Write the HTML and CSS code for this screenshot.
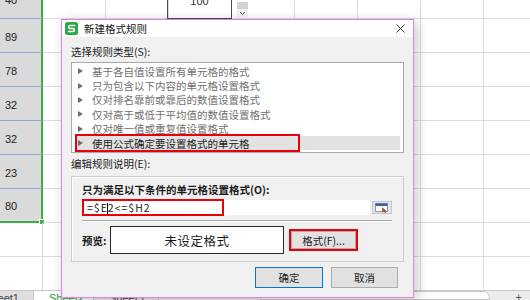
FILE: index.html
```html
<!DOCTYPE html>
<html lang="zh-CN">
    <head>
        <meta charset="UTF-8">
        <title>新建格式规则</title>
        <link rel="stylesheet" href="styles.css">
    </head>
    <body>
        <div class="page">
            <div class="sheet">
                <div class="grid">
                    <div class="cell sel top">40</div><div class="cell"></div><div class="cell"></div><div class="cell drop">100</div><div class="cell"><span class="drop-btn"><svg width="11" height="7" viewBox="0 0 11 7"><path d="M3 2 L5.5 4.5 L8 2" fill="none" stroke="#555" stroke-width="1"/></svg></span></div><div class="cell"></div><div class="cell"></div><div class="cell"></div><div class="cell"></div>
                    <div class="cell sel">89</div><div class="cell"></div><div class="cell"></div><div class="cell"></div><div class="cell"></div><div class="cell"></div><div class="cell"></div><div class="cell"></div><div class="cell"></div>
                    <div class="cell sel">78</div><div class="cell"></div><div class="cell"></div><div class="cell"></div><div class="cell"></div><div class="cell"></div><div class="cell"></div><div class="cell"></div><div class="cell"></div>
                    <div class="cell sel">32</div><div class="cell"></div><div class="cell"></div><div class="cell"></div><div class="cell"></div><div class="cell"></div><div class="cell"></div><div class="cell"></div><div class="cell"></div>
                    <div class="cell sel">32</div><div class="cell"></div><div class="cell"></div><div class="cell"></div><div class="cell"></div><div class="cell"></div><div class="cell"></div><div class="cell"></div><div class="cell"></div>
                    <div class="cell sel">23</div><div class="cell"></div><div class="cell"></div><div class="cell"></div><div class="cell"></div><div class="cell"></div><div class="cell"></div><div class="cell"></div><div class="cell"></div>
                    <div class="cell sel end">80<span class="handle"></span></div><div class="cell"></div><div class="cell"></div><div class="cell"></div><div class="cell"></div><div class="cell"></div><div class="cell"></div><div class="cell"></div><div class="cell"></div>
                    <div class="cell"></div><div class="cell"></div><div class="cell"></div><div class="cell"></div><div class="cell"></div><div class="cell"></div><div class="cell"></div><div class="cell"></div><div class="cell"></div>
                    <div class="cell"></div><div class="cell"></div><div class="cell"></div><div class="cell"></div><div class="cell"></div><div class="cell"></div><div class="cell"></div><div class="cell"></div><div class="cell"></div>
                </div>
            </div>
            <div class="tabs">
                <div class="tab first"><span>Sheet1</span></div>
                <div class="tab active">Sheet2</div>
                <div class="tab">Sheet3</div>
                <div class="scroll"></div>
                <div class="plus">+</div>
            </div>

            <div class="dialog">
                <div class="titlebar">
                    <svg class="logo" width="13" height="13" viewBox="0 0 13 13">
                        <rect width="13" height="13" rx="2.5" fill="#2aa845"/>
                        <path d="M9.6 3.6 H5.1 a1.5 1.5 0 0 0 0 3 h2.8 a1.5 1.5 0 0 1 0 3 H3.4" fill="none" stroke="#fff" stroke-width="1.5" stroke-linecap="round"/>
                    </svg>
                    <span class="title">新建格式规则</span>
                    <svg class="close" width="9" height="9" viewBox="0 0 9 9">
                        <path d="M0.5 0.5 L8.5 8.5 M8.5 0.5 L0.5 8.5" stroke="#333" stroke-width="1"/>
                    </svg>
                </div>
                <div class="body">
                    <div class="label">选择规则类型(S):</div>
                    <ul class="rule-list">
                        <li><i class="tri"></i>基于各自值设置所有单元格的格式</li>
                        <li><i class="tri"></i>只为包含以下内容的单元格设置格式</li>
                        <li><i class="tri"></i>仅对排名靠前或靠后的数值设置格式</li>
                        <li><i class="tri"></i>仅对高于或低于平均值的数值设置格式</li>
                        <li><i class="tri"></i>仅对唯一值或重复值设置格式</li>
                        <li class="selected"><i class="tri"></i>使用公式确定要设置格式的单元格<span class="mark-row"></span></li>
                    </ul>
                    <div class="label">编辑规则说明(E):</div>
                    <div class="group">
                        <div class="label bold">只为满足以下条件的单元格设置格式(O):</div>
                        <div class="formula-row">
                            <div class="formula">=$E<span class="caret"></span>2&lt;=$H2<span class="mark-formula"></span></div>
                            <div class="ref-btn">
                                <svg width="16" height="11" viewBox="0 0 16 11">
                                    <rect x="1.5" y="1.5" width="12" height="8" fill="#fff" stroke="#8a9bb5"/>
                                    <rect x="1.5" y="1.5" width="12" height="2.5" fill="#3d5f9e"/>
                                    <path d="M8 5 L13 9.5 L11 9.5 L12.2 11 L11 11 L10 9.5 L8.5 10.5 Z" fill="#b8452a"/>
                                </svg>
                            </div>
                        </div>
                        <div class="separator"></div>
                        <div class="preview-row">
                            <span class="bold">预览:</span>
                            <div class="preview">未设定格式</div>
                            <div class="mark-btn"><button class="btn small">格式(F)...</button></div>
                        </div>
                    </div>
                    <div class="footer">
                        <button class="btn primary">确定</button>
                        <button class="btn">取消</button>
                    </div>
                </div>
            </div>
        </div>
    </body>
</html>
```

FILE: styles.css
```css
* {
    box-sizing: border-box;
}

body {
    margin: 0;
    font-family: "Noto Sans CJK SC", sans-serif;
    background-color: #fff;
}

.page {
    position: relative;
    width: 530px;
    height: 300px;
    overflow: hidden;
}

/* planilha ao fundo */
.sheet {
    height: 290px;
    overflow: hidden;
}

.grid {
    display: grid;
    grid-template-columns: 43px repeat(8, 63px);
    grid-template-rows: repeat(9, 34px);
    margin-top: -15px;
    font-family: "Liberation Sans", Arial, sans-serif;
    font-size: 11px;
    color: #222;
}

.cell {
    position: relative;
    display: flex;
    align-items: center;
    border-right: 1px solid #dcdcdc;
    border-bottom: 1px solid #dcdcdc;
}

.cell.sel {
    background-color: #dadada;
    border-bottom-color: #8ea6d8;
    border-right: 2px solid #3cae49;
    padding: 2px 0 0 5px;
}

.cell.sel.top {
    padding: 0 0 3px 5px;
}

.cell.sel.end {
    border-bottom: 2px solid #3cae49;
}

.handle {
    position: absolute;
    right: -4px;
    bottom: -4px;
    width: 6px;
    height: 6px;
    background-color: #3cae49;
    border: 1px solid #fff;
}

.cell.drop {
    justify-content: center;
    padding-bottom: 3px;
    border: 1px solid #4d4d4d;
    margin-left: -2px;
    color: #333;
}

.drop-btn {
    position: absolute;
    left: 5px;
    bottom: 1px;
    width: 11px;
    height: 15px;
    display: flex;
    align-items: flex-end;
    background: linear-gradient(#d2d2d2 50%, #f2f2f2 50%);
}

.tabs {
    display: flex;
    height: 10px;
    background-color: #ececec;
    border-top: 1px solid #c8c8c8;
    font-family: "Liberation Sans", Arial, sans-serif;
    font-size: 11px;
    line-height: 12px;
    overflow: hidden;
}

.tab {
    padding: 1px 14px 0 15px;
    color: #444;
    border-right: 1px solid #c8c8c8;
}

.tab.first {
    display: flex;
    justify-content: flex-end;
    width: 34px;
    padding: 1px 14px 0 0;
    overflow: hidden;
    background-color: #dedede;
}

.tab.active {
    width: 60px;
    background-color: #fff;
    color: #1f9a3c;
}

.scroll {
    margin-left: auto;
    width: 230px;
    background-color: #fff;
    border: 1px solid #c8c8c8;
    border-radius: 0 7px 0 0;
}

.plus {
    width: 40px;
    text-align: right;
    padding-right: 8px;
    color: #555;
}

/* janela do dialogo */
.dialog {
    position: absolute;
    left: 61px;
    top: 19px;
    width: 353px;
    height: 279px;
    border: 1px solid #e47fe4;
    background-color: #f0f0f0;
    box-shadow: 3px 3px 12px rgba(0, 0, 0, 0.22);
    font-size: 10.5px;
    color: #1a1a1a;
}

.titlebar {
    display: flex;
    align-items: center;
    height: 17px;
    padding: 0 8px 0 3px;
    background-color: #fff;
}

.title {
    margin-left: 6px;
    color: #111;
}

.close {
    margin-left: auto;
}

.body {
    padding: 8px 9px 0 9px;
}

.label {
    height: 14px;
    line-height: 14px;
    white-space: nowrap;
}

.bold {
    font-weight: bold;
}

.rule-list {
    list-style: none;
    margin: 3px 0 0 0;
    padding: 1px 3px;
    height: 91px;
    background-color: #fff;
    border: 1px solid #a9a9a9;
}

.rule-list li {
    position: relative;
    display: flex;
    align-items: center;
    height: 14.4px;
    padding-left: 3px;
    color: #707070;
    white-space: nowrap;
}

.rule-list li.selected {
    background-color: #e2e2e2;
    color: #1a1a1a;
}

.tri {
    width: 0;
    height: 0;
    margin-right: 9px;
    border-left: 5px solid #6e6e6e;
    border-top: 3.5px solid transparent;
    border-bottom: 3.5px solid transparent;
}

.mark-row {
    position: absolute;
    left: 0;
    top: -2px;
    width: 225px;
    height: 18px;
    border: 2px solid #e8000b;
}

.body > .label:nth-of-type(2) {
    margin-top: 4px;
}

.group {
    margin-top: 5px;
    height: 86px;
    padding: 6px 11px 0 10px;
    border: 1px solid #cdcdcd;
    box-shadow: inset 1px 1px 0 #fff;
}

.formula-row {
    display: flex;
    align-items: center;
    margin-top: 3px;
    height: 15px;
}

.formula {
    position: relative;
    flex: 1;
    height: 15px;
    line-height: 15px;
    padding-left: 5px;
    background-color: #fff;
    letter-spacing: 1px;
    color: #222;
}

.caret {
    display: inline-block;
    width: 1px;
    height: 11px;
    margin: 0 0 -2px -1px;
    background-color: #111;
}

.mark-formula {
    position: absolute;
    left: 0;
    top: -1px;
    width: 142px;
    height: 17px;
    border: 2px solid #e8000b;
}

.ref-btn {
    display: flex;
    align-items: center;
    justify-content: center;
    width: 20px;
    height: 13px;
    margin-left: 2px;
    background-color: #dfe3ea;
    border: 1px solid #c3c7cf;
}

.separator {
    margin-top: 5px;
    height: 1px;
    background-color: #a7a7a7;
    box-shadow: 0 1px 0 #fff;
}

.preview-row {
    display: flex;
    align-items: center;
    margin-top: 5px;
    height: 28px;
}

.preview-row .bold {
    width: 28px;
}

.preview {
    display: flex;
    align-items: center;
    justify-content: center;
    width: 174px;
    height: 28px;
    background-color: #fff;
    border: 1px solid #2b2b2b;
    font-size: 12.5px;
    letter-spacing: 0.5px;
    color: #1a1a1a;
}

.mark-btn {
    margin-left: 5px;
    border: 2px solid #e8000b;
}

.btn {
    display: block;
    height: 21px;
    padding: 0;
    font-family: "Noto Sans CJK SC", sans-serif;
    font-size: 10.5px;
    color: #1a1a1a;
    background-color: #e1e1e1;
    border: 1px solid #adadad;
}

.btn.small {
    width: 65px;
    height: 18px;
}

.footer {
    display: flex;
    justify-content: flex-end;
    gap: 8px;
    margin-top: 5px;
    padding-right: 6px;
}

.footer .btn {
    width: 67px;
}

.btn.primary {
    width: 68px;
    border-color: #0078d7;
}
```
